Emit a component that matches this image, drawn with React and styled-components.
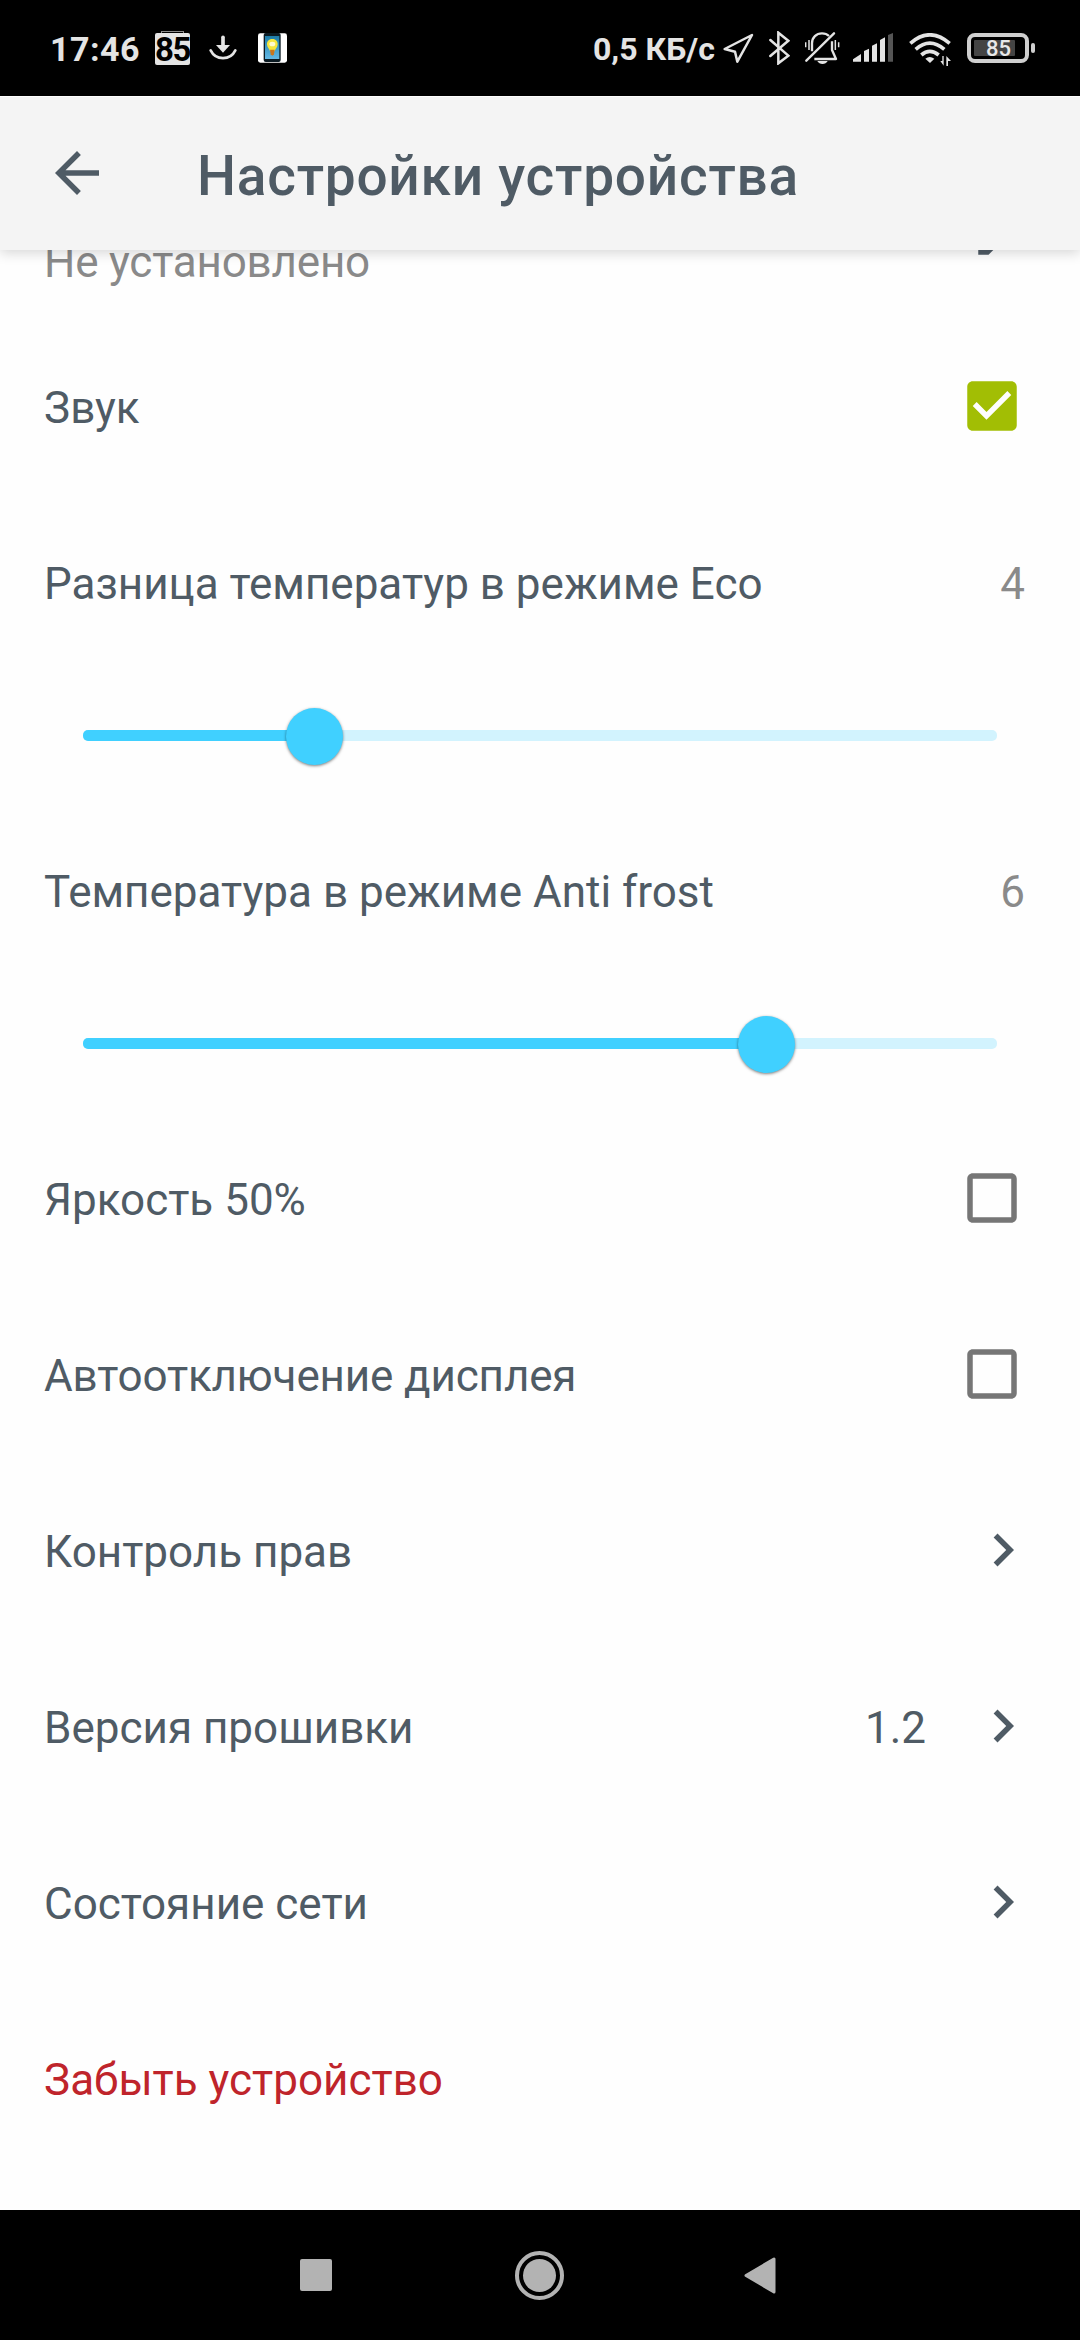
import React from "react";
import styled, { createGlobalStyle } from "styled-components";

const GlobalStyle = createGlobalStyle`
  * {
    box-sizing: border-box;
  }
  body {
    margin: 0;
    background: #fefefe;
    font-family: Roboto, "Liberation Sans", sans-serif;
  }
  svg {
    display: block;
    flex-shrink: 0;
  }
`;

const Screen = styled.div`
  display: flex;
  flex-direction: column;
  width: 1080px;
  height: 2340px;
  overflow: hidden;
  background: #fefefe;
  color: #4f5b65;
`;

const StatusBar = styled.div`
  display: flex;
  align-items: flex-start;
  height: 96px;
  padding: 31px 45px 0 50px;
  background: #000;
  color: #e4e4e4;
  white-space: nowrap;
`;

const StatusSlot = styled.div`
  flex: none;
  width: ${(p) => p.$width}px;
  margin-left: ${(p) => p.$gap || 0}px;
  margin-top: ${(p) => p.$drop || 0}px;
`;

const StatusText = styled.span`
  display: block;
  font-size: ${(p) => p.$size || 34}px;
  line-height: 36px;
  font-weight: 700;
  letter-spacing: ${(p) => p.$spacing || 0}px;
`;

const Spacer = styled.div`
  flex: 1;
`;

const Badge = styled.div`
  height: 32px;
  margin-top: 2px;
  border-radius: 2px;
  background: #e4e4e4;
  color: #000;
  font-size: 33px;
  line-height: 33px;
  font-weight: 700;
  text-align: center;
  letter-spacing: -1.5px;
`;

const BadgeCap = styled.div`
  height: 2px;
  margin: 0 6px -2px;
  border: 1px solid #8a8a8a;
  border-bottom: none;
`;

const Battery = styled.div`
  display: flex;
  align-items: center;
  gap: 2px;
`;

const BatteryShell = styled.div`
  width: 62px;
  height: 30px;
  padding: 3px;
  border: 4px solid #cfcfcf;
  border-radius: 8px;
`;

const BatteryLevel = styled.div`
  width: 41px;
  height: 16px;
  padding-left: 12px;
  border-radius: 1px;
  background: #444;
  color: #e8e8e8;
  font-size: 22px;
  line-height: 18px;
  font-weight: 500;
`;

const BatteryTip = styled.div`
  width: 4px;
  height: 10px;
  border-radius: 2px;
  background: #cfcfcf;
`;

const Header = styled.header`
  position: relative;
  z-index: 1;
  display: flex;
  flex: none;
  align-items: center;
  height: 154px;
  padding-left: 44px;
  background: #f4f4f4;
  box-shadow: inset 0 1px #fff, 0 3px 12px rgba(0, 0, 0, 0.16);
`;

const Title = styled.h1`
  margin: 5px 0 0 87px;
  font-size: 55px;
  line-height: 64px;
  font-weight: 500;
  letter-spacing: 0.75px;
  white-space: nowrap;
`;

const List = styled.main`
  flex: 1;
  overflow: hidden;
`;

const Row = styled.div`
  display: flex;
  align-items: center;
  justify-content: space-between;
  height: 176px;
  padding: 0 ${(p) => p.$right || 44}px 0 44px;
  white-space: nowrap;
`;

/* the list is scrolled, so this row sits partly under the header */
const ScrolledRow = styled(Row)`
  margin-top: -108px;
`;

const Label = styled.span`
  padding-top: 3px;
  font-size: 44px;
  line-height: 52px;
  letter-spacing: ${(p) => p.$spacing || 0}px;
  color: ${(p) => (p.$danger ? "#bf242b" : "inherit")};
`;

const SubLabel = styled(Label)`
  align-self: flex-end;
  padding: 0 0 30px;
  color: #8a8a8a;
`;

const Value = styled(Label)`
  color: #8a8a8a;
`;

const Trailing = styled.div`
  display: flex;
  align-items: center;
  gap: 44px;
`;

const SliderBox = styled.div`
  display: flex;
  align-items: center;
  height: 132px;
  padding: 0 83px 1px;
`;

const Track = styled.div`
  position: relative;
  width: 914px;
  height: 11px;
  border-radius: 5px;
  background: #d2f3fe;
`;

const Fill = styled.div`
  height: 11px;
  border-radius: 5px;
  background: #40d0ff;
`;

const Thumb = styled.div`
  position: absolute;
  top: -22px;
  width: 57px;
  height: 57px;
  margin-left: -28px;
  border-radius: 50%;
  background: #40d0ff;
  box-shadow: 0 1px 3px rgba(0, 0, 0, 0.5);
`;

const NavBar = styled.nav`
  display: flex;
  flex: none;
  align-items: center;
  height: 130px;
  padding-left: 300px;
  background: #000;
`;

const RecentButton = styled.div`
  width: 32px;
  height: 32px;
  border-radius: 2px;
  background: #b3b3b3;
`;

const HomeButton = styled.div`
  width: 49px;
  height: 49px;
  margin-left: 183px;
  padding: 4px;
  border: 4px solid #b3b3b3;
  border-radius: 50%;

  &::before {
    content: "";
    display: block;
    height: 33px;
    border-radius: 50%;
    background: #b3b3b3;
  }
`;

const BackButton = styled.div`
  margin-left: 180px;
`;

const MaterialIcon = ({ d, color = "currentColor" }) => (
  <svg width="66" height="66" viewBox="0 0 24 24" fill={color}>
    <path d={d} />
  </svg>
);

const ArrowBack = () => (
  <MaterialIcon d="M20 11H7.83l5.59-5.59L12 4l-8 8 8 8 1.41-1.41L7.83 13H20v-2z" />
);

const Chevron = () => (
  <MaterialIcon d="M10 6L8.59 7.41 13.17 12l-4.58 4.59L10 18l6-6z" />
);

const Pencil = () => (
  <MaterialIcon d="M3 17.25V21h3.75L17.81 9.94l-3.75-3.75L3 17.25zM20.71 7.04a1 1 0 0 0 0-1.41l-2.34-2.34a1 1 0 0 0-1.41 0l-1.83 1.83 3.75 3.75 1.83-1.83z" />
);

const Checkbox = ({ checked }) =>
  checked ? (
    <MaterialIcon
      color="#a2be04"
      d="M19 3H5c-1.1 0-2 .9-2 2v14c0 1.1.9 2 2 2h14c1.1 0 2-.9 2-2V5c0-1.1-.9-2-2-2zm-9 14l-5-5 1.41-1.41L10 14.17l7.59-7.59L19 8l-9 9z"
    />
  ) : (
    <MaterialIcon
      color="#767676"
      d="M19 5v14H5V5h14m0-2H5c-1.1 0-2 .9-2 2v14c0 1.1.9 2 2 2h14c1.1 0 2-.9 2-2V5c0-1.1-.9-2-2-2z"
    />
  );

const Download = () => (
  <svg width="28" height="25" viewBox="0 0 84 75" fill="none" stroke="#e4e4e4">
    <path d="M42 7V34" strokeWidth="11" strokeLinecap="round" />
    <path d="M21 30H63L42 53z" fill="#e4e4e4" stroke="none" />
    <path d="M5 46C20 77 64 77 79 46" strokeWidth="8" strokeLinecap="round" />
  </svg>
);

const BulbApp = () => (
  <svg width="29" height="30" viewBox="0 0 87 90">
    <defs>
      <linearGradient id="screen" x1="0" y1="0" x2="0" y2="1">
        <stop offset="0" stopColor="#1c7ba6" />
        <stop offset="1" stopColor="#63b9e6" />
      </linearGradient>
    </defs>
    <rect y="1" width="87" height="88" rx="7" fill="#fff" />
    <rect x="17" width="51" height="87" rx="6" fill="#0b1a22" />
    <rect x="21" y="9" width="43" height="69" fill="url(#screen)" />
    <path d="M43 18c-11 0-17 8-16 17 1 9 8 12 9 20h14c1-8 8-11 9-20 1-9-5-17-16-17z" fill="#f6e63c" />
    <ellipse cx="43" cy="33" rx="9" ry="7" fill="#fffbd0" />
    <path d="M36 50H50L48 64L43 68L38 64z" fill="#c9761d" />
  </svg>
);

const Location = () => (
  <svg width="31" height="31" viewBox="0 0 93 93" fill="none" stroke="#e4e4e4" strokeWidth="7.5" strokeLinejoin="round">
    <path d="M87 6L43 86L36 56L5 48z" />
  </svg>
);

const Bluetooth = () => (
  <svg width="21" height="34" viewBox="0 0 63 102" fill="none" stroke="#e4e4e4" strokeWidth="7.5" strokeLinecap="round">
    <path d="M4 27L58 74L28 97V5L58 29L4 75" />
  </svg>
);

const BellOff = () => (
  <svg width="35" height="33" viewBox="0 0 105 99" fill="none" stroke="#e4e4e4" strokeWidth="7">
    <path d="M4 86L87 4" strokeLinecap="round" />
    <path d="M21 58V34C21 16 34 4 51 4C61 4 67 7 72 12" />
    <path d="M81 28V54L93 81H28" strokeLinejoin="round" />
    <path d="M37 87H68C62 99 43 99 37 87z" fill="#e4e4e4" stroke="none" />
    <path d="M2 31V46M12 24V54M91 24V54M101 31V46" strokeWidth="4.5" />
  </svg>
);

const Signal = () => (
  <svg width="40" height="29" viewBox="0 0 120 87" fill="#e4e4e4">
    <path d="M0 86V79L24 63V86z" />
    <path d="M33 86V54L48 47V86z" />
    <path d="M57 86V38L72 31V86z" />
    <path d="M81 86V21L96 13V86z" />
    <path d="M105 86V6L120 0V86z" fill="#555" />
  </svg>
);

const Wifi = () => (
  <svg width="43" height="33" viewBox="0 0 129 99" fill="none" stroke="#e4e4e4" strokeWidth="11">
    <path d="M4 31Q62 -20 122 31" />
    <path d="M20 49Q62 12 106 49" />
    <path d="M37 66Q62 44 89 66" />
    <path d="M49 77Q62 67 76 77L63 90z" fill="#e4e4e4" stroke="none" />
    <path d="M104 69V98L94 84H100V69zM112 99V69L126 84H117V99z" fill="#e4e4e4" stroke="none" />
  </svg>
);

const Triangle = () => (
  <svg width="32" height="37" viewBox="0 0 32 37" fill="#b3b3b3" stroke="#b3b3b3" strokeWidth="3" strokeLinejoin="round">
    <path d="M2 18.5L30 2V35z" />
  </svg>
);

const Slider = ({ percent }) => {
  // the thumb travels between the rounded ends of the track
  const x = 5 + (904 * percent) / 100;
  return (
    <SliderBox>
      <Track>
        <Fill style={{ width: x }} />
        <Thumb style={{ left: x }} />
      </Track>
    </SliderBox>
  );
};

const App = () => {
  return (
    <Screen>
      <GlobalStyle />
      <StatusBar>
        <StatusSlot $width={89}>
          <StatusText $spacing={0.5}>17:46</StatusText>
        </StatusSlot>
        <StatusSlot $width={35} $gap={16}>
          <BadgeCap />
          <Badge>85</Badge>
        </StatusSlot>
        <StatusSlot $width={28} $gap={19} $drop={4}>
          <Download />
        </StatusSlot>
        <StatusSlot $width={29} $gap={21} $drop={2}>
          <BulbApp />
        </StatusSlot>
        <Spacer />
        <StatusSlot $width={124}>
          <StatusText $size={32}>0,5 КБ/с</StatusText>
        </StatusSlot>
        <StatusSlot $width={31} $gap={6} $drop={2}>
          <Location />
        </StatusSlot>
        <StatusSlot $width={21} $gap={15}>
          <Bluetooth />
        </StatusSlot>
        <StatusSlot $width={35} $gap={15} $drop={1}>
          <BellOff />
        </StatusSlot>
        <StatusSlot $width={40} $gap={13} $drop={2}>
          <Signal />
        </StatusSlot>
        <StatusSlot $width={43} $gap={16} $drop={2}>
          <Wifi />
        </StatusSlot>
        <StatusSlot $width={68} $gap={15} $drop={2}>
          <Battery>
            <BatteryShell>
              <BatteryLevel>85</BatteryLevel>
            </BatteryShell>
            <BatteryTip />
          </Battery>
        </StatusSlot>
      </StatusBar>

      <Header>
        <ArrowBack />
        <Title>Настройки устройства</Title>
      </Header>

      <List>
        <ScrolledRow>
          <SubLabel $spacing={-0.2}>Не установлено</SubLabel>
          <Pencil />
        </ScrolledRow>
        <Row $right={55}>
          <Label>Звук</Label>
          <Checkbox checked />
        </Row>
        <Row $right={55}>
          <Label>Разница температур в режиме Eco</Label>
          <Value>4</Value>
        </Row>
        <Slider percent={25} />
        <Row $right={55}>
          <Label>Температура в режиме Anti frost</Label>
          <Value>6</Value>
        </Row>
        <Slider percent={75} />
        <Row $right={55}>
          <Label>Яркость 50%</Label>
          <Checkbox />
        </Row>
        <Row $right={55}>
          <Label $spacing={-0.14}>Автоотключение дисплея</Label>
          <Checkbox />
        </Row>
        <Row>
          <Label>Контроль прав</Label>
          <Chevron />
        </Row>
        <Row>
          <Label>Версия прошивки</Label>
          <Trailing>
            <Label>1.2</Label>
            <Chevron />
          </Trailing>
        </Row>
        <Row>
          <Label>Состояние сети</Label>
          <Chevron />
        </Row>
        <Row>
          <Label $danger>Забыть устройство</Label>
        </Row>
      </List>

      <NavBar>
        <RecentButton />
        <HomeButton />
        <BackButton>
          <Triangle />
        </BackButton>
      </NavBar>
    </Screen>
  );
};

export default App;
